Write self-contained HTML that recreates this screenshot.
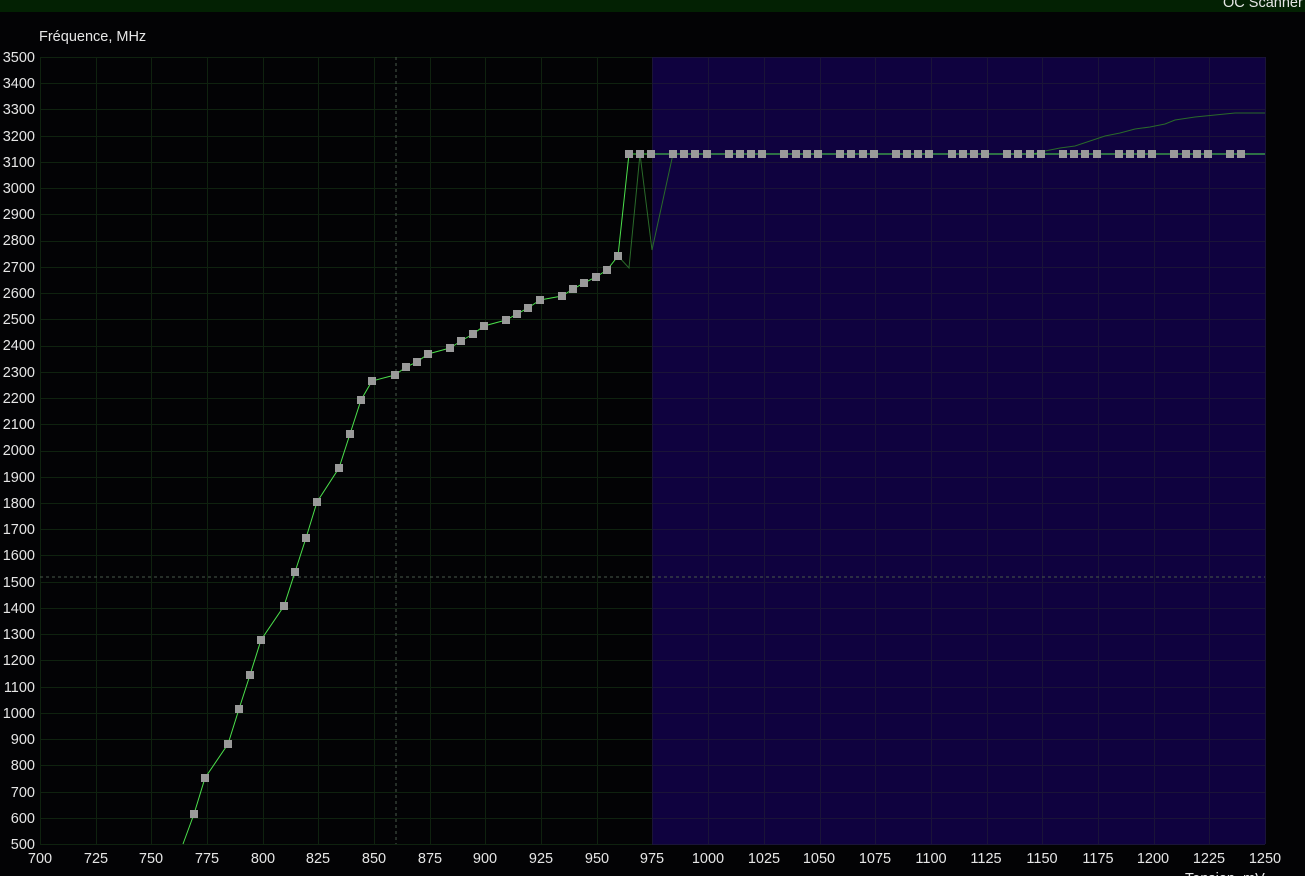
<!DOCTYPE html>
<html><head><meta charset="utf-8"><style>
html,body{margin:0;padding:0;background:#000;width:1305px;height:876px;overflow:hidden}
svg{display:block}
text{font-family:"Liberation Sans",Arial,sans-serif;fill:#e6e6e6;font-size:14.5px}
</style></head><body>
<svg id="s" width="1305" height="876" xmlns="http://www.w3.org/2000/svg">
<rect x="0" y="0" width="1305" height="876" fill="#030305"/>
<rect x="0" y="0" width="1305" height="12" fill="#032103"/>
<text x="1223" y="7" font-size="16">OC Scanner</text>
<text x="39" y="41">Fréquence, MHz</text>
<rect x="652" y="57" width="613" height="787" fill="#0f023f"/>
<g id="grid"></g>
<line x1="396" y1="57" x2="396" y2="844" stroke="#4a5a4a" stroke-width="1" stroke-dasharray="3,3"/>
<line x1="40" y1="577" x2="1265" y2="577" stroke="#4a5a4a" stroke-width="1" stroke-dasharray="3,3"/>
<polyline fill="none" stroke="#2a6a2a" stroke-width="1" points="618,256 629,268 640,154 652,250 673,154 1033,154 1045,151 1060,148 1075,146 1090,141 1105,136 1120,133 1135,129 1150,127 1165,124 1175,120 1195,117 1215,115 1235,113 1265,113"/>
<polyline id="main" fill="none" stroke="#4ce04c" stroke-width="1" points=""/>
<g id="sq" fill="#9a9a9a"></g>
<g id="yl" text-anchor="end">
<text x="35" y="62">3500</text><text x="35" y="88">3400</text><text x="35" y="114">3300</text><text x="35" y="141">3200</text><text x="35" y="167">3100</text><text x="35" y="193">3000</text><text x="35" y="219">2900</text><text x="35" y="245">2800</text><text x="35" y="272">2700</text><text x="35" y="298">2600</text><text x="35" y="324">2500</text><text x="35" y="350">2400</text><text x="35" y="377">2300</text><text x="35" y="403">2200</text><text x="35" y="429">2100</text><text x="35" y="455">2000</text><text x="35" y="482">1900</text><text x="35" y="508">1800</text><text x="35" y="534">1700</text><text x="35" y="560">1600</text><text x="35" y="587">1500</text><text x="35" y="613">1400</text><text x="35" y="639">1300</text><text x="35" y="665">1200</text><text x="35" y="692">1100</text><text x="35" y="718">1000</text><text x="35" y="744">900</text><text x="35" y="770">800</text><text x="35" y="797">700</text><text x="35" y="823">600</text><text x="35" y="849">500</text>
</g>
<g text-anchor="middle">
<text x="40" y="863">700</text><text x="96" y="863">725</text><text x="151" y="863">750</text><text x="207" y="863">775</text><text x="263" y="863">800</text><text x="318" y="863">825</text><text x="374" y="863">850</text><text x="430" y="863">875</text><text x="485" y="863">900</text><text x="541" y="863">925</text><text x="597" y="863">950</text><text x="652" y="863">975</text><text x="708" y="863">1000</text><text x="764" y="863">1025</text><text x="819" y="863">1050</text><text x="875" y="863">1075</text><text x="931" y="863">1100</text><text x="986" y="863">1125</text><text x="1042" y="863">1150</text><text x="1098" y="863">1175</text><text x="1153" y="863">1200</text><text x="1209" y="863">1225</text><text x="1265" y="863">1250</text>
</g>
<text x="1185" y="883">Tension, mV</text>
</svg>
<script>
var g=document.getElementById('grid'),h='';
for(var i=0;i<=30;i++){var y=Math.round(844-i*26.233)+.5;
h+='<line x1="40" y1="'+y+'" x2="652" y2="'+y+'" stroke="#0f220f"/><line x1="652" y1="'+y+'" x2="1265" y2="'+y+'" stroke="#1a1438"/>';}
for(var j=0;j<=22;j++){var x=Math.round(40+j*55.68)+.5;
h+='<line x1="'+x+'" y1="57" x2="'+x+'" y2="844" stroke="'+(x>652?'#1a1438':'#0f220f')+'"/>';}
g.innerHTML=h;
var pts=[[183,844],[194,814],[205,778],[228,744],[239,709],[250,675],[261,640],[284,606],[295,572],[306,538],[317,502],[339,468],[350,434],[361,400],[372,381],[395,375],[406,367],[417,362],[428,354],[450,348],[461,341],[473,334],[484,326],[506,320],[517,314],[528,308],[540,300],[562,296],[573,289],[584,283],[596,277],[607,270],[618,256],[629,154],[640,154],[651,154]];
var sx=[];for(var k=0;k<11;k++){for(var m=0;m<4;m++){var xx=673+k*55.7+m*11.2;if(k==10&&m>1)continue;sx.push(Math.round(xx));}}
sx.forEach(function(x){pts.push([x,154]);});
var line=pts.map(function(p){return p.join(',')}).join(' ')+' 1265,154';
document.getElementById('main').setAttribute('points',line);
var s='';pts.forEach(function(p,i){if(i==0)return;s+='<rect x="'+(p[0]-4)+'" y="'+(p[1]-4)+'" width="8" height="8"/>';});
document.getElementById('sq').innerHTML=s;
</script>
</body></html>
